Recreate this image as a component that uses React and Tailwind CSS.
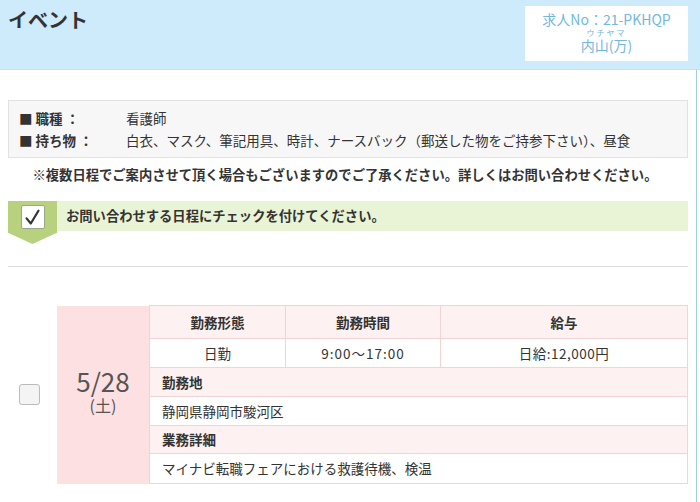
import React from 'react';

const font = { fontFamily: '"Noto Sans CJK JP", "Noto Sans", sans-serif' };

function Header() {
    return (
        <div className="h-[70px] bg-[#cdebfb] border-b border-[#c3e2f3] flex justify-between pl-2 pr-3 pt-[6px]">
            <h1 className="text-[20px] font-bold text-[#333] leading-[28px]">イベント</h1>
            <div className="w-[163px] h-[55px] bg-white flex flex-col items-center text-[#72b8dc] pt-[5px]">
                <div className="text-[14px] leading-[17px]">求人No：21-PKHQP</div>
                <div className="text-[8px] leading-[9px] tracking-[2px]">ウチヤマ</div>
                <div className="text-[14px] leading-[17px]">内山(万)</div>
            </div>
        </div>
    );
}

function InfoBox() {
    const rows = [
        ['職種', '看護師'],
        ['持ち物', '白衣、マスク、筆記用具、時計、ナースバック（郵送した物をご持参下さい）、昼食'],
    ];
    return (
        <div className="bg-[#f7f7f7] border border-[#e2e2e2] px-[10px] py-[6px] text-[13.5px] text-[#333]">
            {rows.map(([label, value]) => (
                <div key={label} className="flex leading-[22px]">
                    <span className="w-[107px] font-bold shrink-0">■ {label} ：</span>
                    <span>{value}</span>
                </div>
            ))}
        </div>
    );
}

function CheckNotice() {
    return (
        <div className="flex items-start">
            <div className="w-[49px] h-[43px] bg-[#b7d17f] [clip-path:polygon(0_0,100%_0,100%_74%,50%_100%,0_74%)] flex justify-center pt-[4px]">
                <div className="w-[24px] h-[24px] bg-white border border-[#9aa88a] rounded-[2px] flex items-center justify-center">
                    <svg width="17" height="17" viewBox="0 0 20 20">
                        <path d="M3 11 L8 17 L17 2" fill="none" stroke="#333" strokeWidth="2.6" strokeLinecap="round" strokeLinejoin="round" />
                    </svg>
                </div>
            </div>
            <div className="flex-1 h-[30px] bg-[#e9f4d6] flex items-center pl-[9px] text-[13.3px] font-bold text-[#333]">
                お問い合わせする日程にチェックを付けてください。
            </div>
        </div>
    );
}

function ScheduleCard() {
    const th = "border border-[#f3d3d6] bg-[#fdf1f1] font-bold";
    const td = "border border-[#f3d3d6] bg-white";
    return (
        <div className="flex items-center">
            <div className="w-[49px] flex justify-center pr-[6px]">
                <div className="w-[21px] h-[21px] border border-[#bbb] bg-[#f4f4f4] rounded-[3px]"></div>
            </div>
            <div className="w-[92px] h-[178px] bg-[#fde0e2] flex flex-col items-center justify-center text-[#555] pb-[8px]">
                <div className="text-[26px] leading-[28px]">5/28</div>
                <div className="text-[16px] leading-[20px]">(土)</div>
            </div>
            <table className="flex-1 border-collapse text-[13.5px] text-[#333]">
                <tbody>
                    <tr className="h-[33px] text-center">
                        <td className={`${th} w-[136px]`}>勤務形態</td>
                        <td className={`${th} w-[155px]`}>勤務時間</td>
                        <td className={th}>給与</td>
                    </tr>
                    <tr className="h-[29px] text-center">
                        <td className={td}>日勤</td>
                        <td className={`${td} tracking-[1px]`}>9:00～17:00</td>
                        <td className={`${td} tracking-[0.5px]`}>日給:12,000円</td>
                    </tr>
                    <tr className="h-[29px]">
                        <td colSpan={3} className={`${th} px-[12px]`}>勤務地</td>
                    </tr>
                    <tr className="h-[29px]">
                        <td colSpan={3} className={`${td} px-[12px]`}>静岡県静岡市駿河区</td>
                    </tr>
                    <tr className="h-[28px]">
                        <td colSpan={3} className={`${th} px-[12px]`}>業務詳細</td>
                    </tr>
                    <tr className="h-[30px]">
                        <td colSpan={3} className={`${td} px-[12px]`}>マイナビ転職フェアにおける救護待機、検温</td>
                    </tr>
                </tbody>
            </table>
        </div>
    );
}

export default function App() {
    return (
        <div className="w-[700px] h-[502px] overflow-hidden bg-white" style={font}>
            <Header />
            <div className="w-[697px] h-[432px] border-r border-[#9ccfe0] pl-2 pr-[8px] pt-[30px]">
                <InfoBox />
                <p className="text-center text-[13.3px] font-bold text-[#333] mt-[6px] mb-[15px] leading-[22px] pr-[6px]">
                    ※複数日程でご案内させて頂く場合もございますのでご了承ください。詳しくはお問い合わせください。
                </p>
                <CheckNotice />
                <div className="border-t border-[#dedede] mt-[22px] mb-[38px]"></div>
                <ScheduleCard />
            </div>
        </div>
    );
}
